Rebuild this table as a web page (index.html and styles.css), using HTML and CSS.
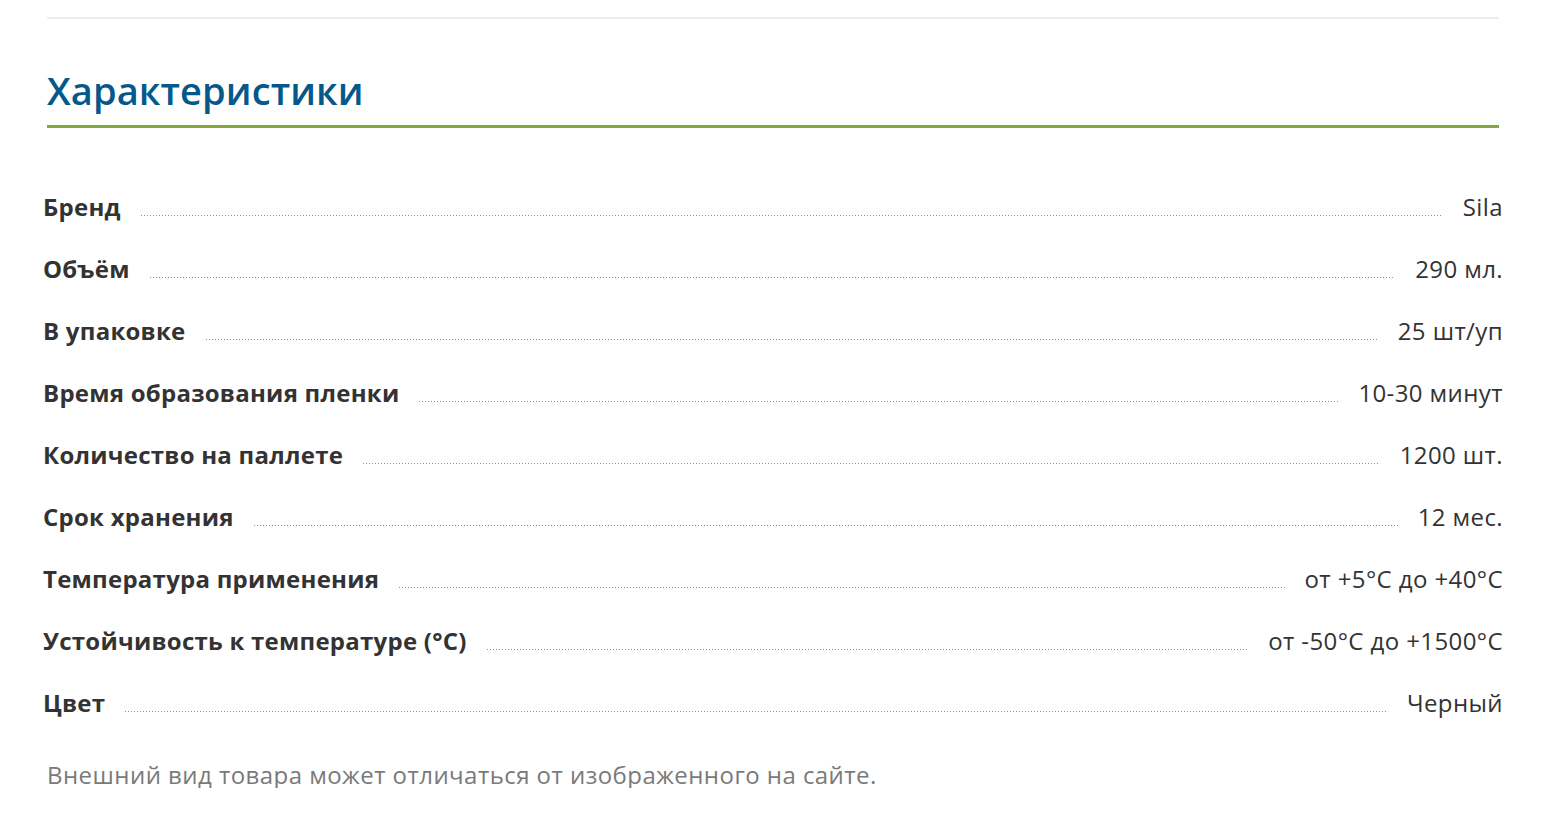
FILE: index.html
```html
<!DOCTYPE html>
<html lang="ru">
<head>
<meta charset="utf-8">
<title>Характеристики</title>
<link rel="stylesheet" href="styles.css">
</head>
<body>
<div class="page">
  <div class="divider"></div>
  <h2 class="title">Характеристики</h2>
  <div class="specs">
    <div class="row"><span class="label">Бренд</span><span class="dots"></span><span class="value">Sila</span></div>
    <div class="row"><span class="label">Объём</span><span class="dots"></span><span class="value">290 мл.</span></div>
    <div class="row"><span class="label">В упаковке</span><span class="dots"></span><span class="value">25 шт/уп</span></div>
    <div class="row"><span class="label">Время образования пленки</span><span class="dots"></span><span class="value">10-30 минут</span></div>
    <div class="row"><span class="label">Количество на паллете</span><span class="dots"></span><span class="value">1200 шт.</span></div>
    <div class="row"><span class="label">Срок хранения</span><span class="dots"></span><span class="value">12 мес.</span></div>
    <div class="row"><span class="label">Температура применения</span><span class="dots"></span><span class="value">от +5°C до +40°C</span></div>
    <div class="row"><span class="label">Устойчивость к температуре (°C)</span><span class="dots"></span><span class="value">от -50°C до +1500°C</span></div>
    <div class="row"><span class="label">Цвет</span><span class="dots"></span><span class="value">Черный</span></div>
  </div>
  <p class="note">Внешний вид товара может отличаться от изображенного на сайте.</p>
</div>
</body>
</html>
```
FILE: styles.css
```css
html, body {
  margin: 0;
  padding: 0;
  background: #fff;
}
body {
  font-family: "Open Sans", "Noto Sans", sans-serif;
  color: #333;
}
.page {
  width: 1452px;
  margin-left: 47px;
  padding-top: 17px;
}
.divider {
  height: 2px;
  background: #ededed;
}
.title {
  margin: 49px 0 0;
  padding-bottom: 13px;
  font-size: 38px;
  line-height: 44px;
  font-weight: 600;
  letter-spacing: 0.1px;
  color: #05588a;
  border-bottom: 3px solid #84a83e;
}
.specs {
  margin: 47px -4px 0 -4px;
}
.row {
  display: flex;
  align-items: center;
  height: 62px;
  font-size: 24px;
}
.label {
  font-weight: 700;
  letter-spacing: 0.25px;
  color: #333;
  white-space: nowrap;
}
.value {
  font-weight: 400;
  letter-spacing: 0.4px;
  color: #333;
  white-space: nowrap;
}
.dots {
  flex: 1;
  align-self: flex-start;
  margin: 40px 20px 0;
  height: 1px;
  background-image: linear-gradient(to right, #8f8f8f 1px, transparent 1px);
  background-size: 3px 1px;
  background-repeat: repeat-x;
}
.note {
  margin: 29px 0 0;
  font-size: 24px;
  line-height: 26px;
  letter-spacing: 0.45px;
  color: #7a7a7a;
}
```
